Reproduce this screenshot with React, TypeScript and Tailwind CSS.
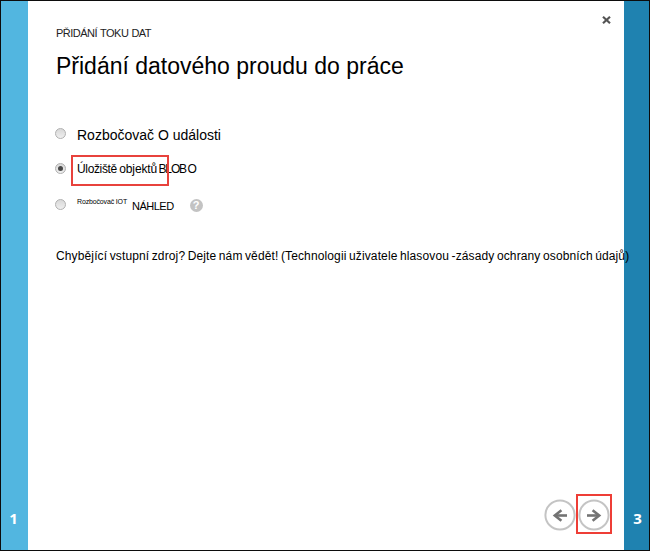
import type { ReactNode } from 'react';

function Radio({ checked = false }: { checked?: boolean }) {
  return (
    <span className="mb-[3px] flex h-[11px] w-[11px] shrink-0 items-center justify-center rounded-full border border-[#b0b0b0] bg-linear-to-b from-[#d8d8d8] to-[#efefef]">
      {checked && <span className="h-[5px] w-[5px] rounded-full bg-[#484848]" />}
    </span>
  );
}

function Option({ checked, className, children }: { checked?: boolean; className: string; children: ReactNode }) {
  return (
    <div className={`flex items-center whitespace-nowrap ${className}`}>
      <Radio checked={checked} />
      {children}
    </div>
  );
}

function ArrowButton({ flipped = false }: { flipped?: boolean }) {
  return (
    <button className="block h-8 w-8 pt-px">
      <svg viewBox="0 0 32 32" className={flipped ? 'h-8 w-8 -scale-x-100' : 'h-8 w-8'} fill="none">
        <circle cx="16" cy="16" r="14.6" stroke="#c4c4c4" strokeWidth="2" />
        <path d="M9 16.5H21" stroke="#737373" strokeWidth="2.6" />
        <path d="M14.6 11.2l6.6 5.3-6.6 5.3" stroke="#737373" strokeWidth="2.6" />
      </svg>
    </button>
  );
}

export default function App() {
  return (
    <div className="flex h-[551px] w-[650px] overflow-hidden border border-[#0c0c0c] bg-white font-['Liberation_Sans',Arial,sans-serif] text-black">
      <aside className="flex w-[27px] shrink-0 flex-col justify-end bg-[#52b6e0] pr-0.5 pb-[21px] text-center font-['Noto_Sans',sans-serif] text-[15px] leading-[22px] font-bold text-white">
        1
      </aside>

      <main className="relative z-10 flex w-[596px] shrink-0 flex-col pl-[27px]">
        <div className="flex justify-between pr-[13px] pl-px">
          <p className="mt-6 text-[11px] leading-4 tracking-[-0.5px] text-[#222] [word-spacing:0.5px]">PŘIDÁNÍ TOKU DAT</p>
          <svg viewBox="0 0 9 8" className="mt-[15px] h-2 w-[9px]" fill="none">
            <path d="M1 .8l7 6.4M8 .8L1 7.2" stroke="#555" strokeWidth="2.2" />
          </svg>
        </div>
        <h1 className="mt-[11px] pl-px text-[23px] leading-7 whitespace-nowrap">Přidání datového proudu do práce</h1>

        <Option className="mt-[45px] h-5">
          <span className="ml-[11px] text-[14px] leading-5">Rozbočovač O události</span>
        </Option>
        <Option checked className="mt-[10px] h-[29px]">
          <span className="relative ml-[5px] flex h-[29px] items-center pl-1.5">
            <span className="pb-px text-[12px] leading-4 tracking-[-0.35px] [word-spacing:-0.7px]">
              Úložiště <span className="tracking-[-0.1px] [word-spacing:-2px]">objektů </span>
              <span className="tracking-[-1.1px]">BLOB O</span>
            </span>
            <span className="absolute top-0 left-0 h-[31px] w-[98px] border-2 border-[#e8423c]" />
          </span>
        </Option>
        <Option className="mt-3 h-5">
          <span className="ml-[11px] self-start text-[7px] leading-3 tracking-[-0.15px]">Rozbočovač IOT</span>
          <span className="ml-[5px] pb-px text-[11px] leading-4 tracking-[-0.5px]">NÁHLED</span>
          <span className="mb-px ml-4 flex h-[13px] w-[13px] items-center justify-center rounded-full bg-[#c3c3c3] text-[11px] leading-[13px] font-bold text-white">
            ?
          </span>
        </Option>

        <p className="mt-8 pl-px text-[12px] leading-4 tracking-[0.13px] whitespace-nowrap [word-spacing:-1px]">
          Chybějící vstupní zdroj? Dejte nám vědět! (Technologii uživatele hlasovou -zásady ochrany osobních údajů)
        </p>

        <div className="mt-auto mb-4 flex items-center justify-end pr-3">
          <ArrowButton flipped />
          <div className="flex h-10 w-9 items-center justify-center border-2 border-[#ee3e36]">
            <ArrowButton />
          </div>
        </div>
      </main>

      <aside className="flex w-[25px] shrink-0 flex-col justify-end bg-[#1f82b0] pb-[21px] pl-0.5 text-center font-['Noto_Sans',sans-serif] text-[15px] leading-[22px] font-bold text-white">
        3
      </aside>
    </div>
  );
}
